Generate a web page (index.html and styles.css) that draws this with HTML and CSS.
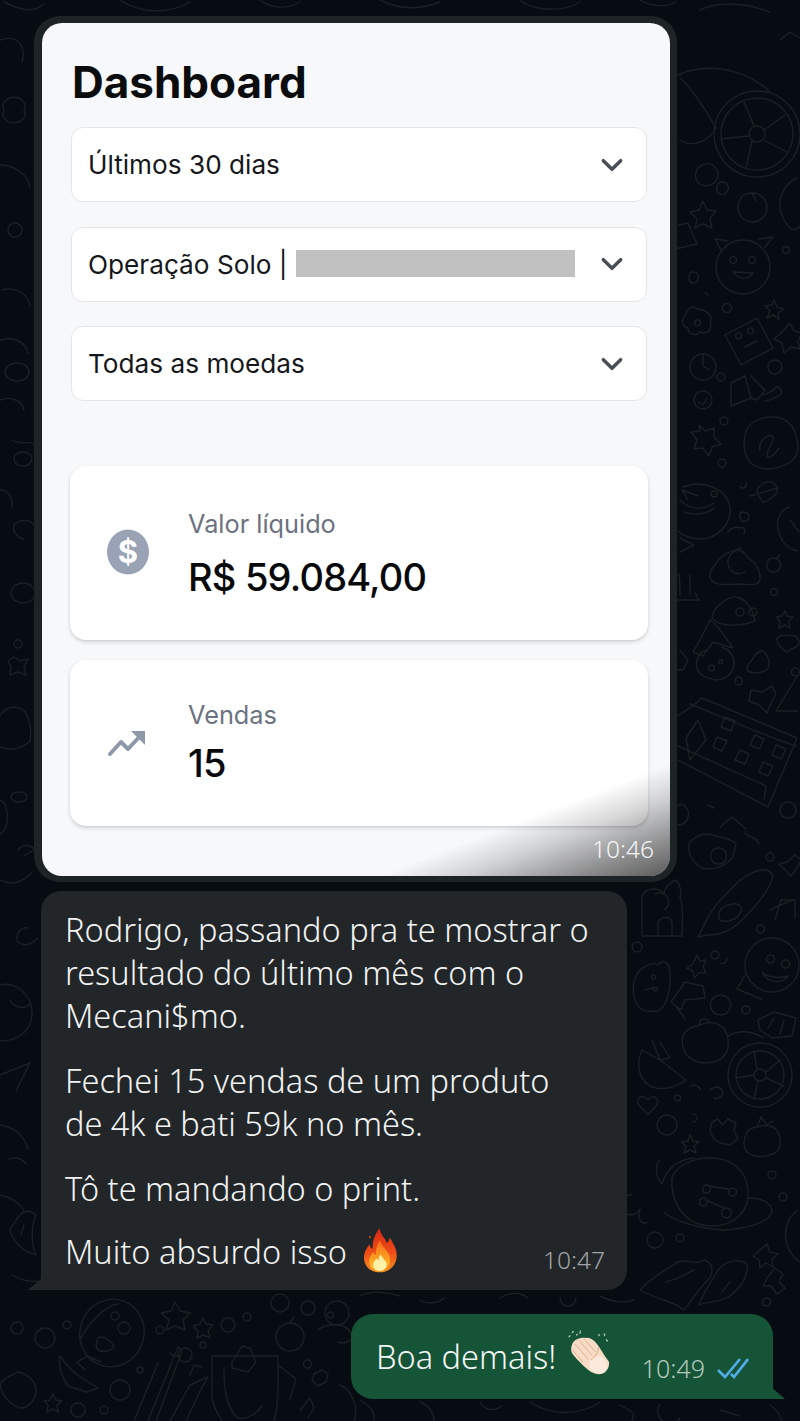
FILE: index.html
```html
<!DOCTYPE html>
<html lang="pt-BR">
<head>
<meta charset="utf-8">
<title>Dashboard</title>
<link rel="stylesheet" href="styles.css">
</head>
<body>
<svg class="doodles" viewBox="0 0 800 1421" aria-hidden="true">
  <g class="doodle-lines">
    <!-- top right: wheel, face, stars -->
    <circle cx="757" cy="134" r="43"/><circle cx="757" cy="134" r="36"/><circle cx="757" cy="134" r="8"/>
    <path d="M754 126L744 102M764 130L785 115M764 140L787 152M749 136L721 139M752 141L746 168"/>
    <path d="M678 75C705 62 745 68 770 92M680 140C692 148 708 142 716 128C706 110 690 86 680 78M705 164c-8 2-12 10-8 17s16 6 20-2-4-17-12-15z"/>
    <path d="M722 182c5 0 7 4 6 8s-7 6-10 3-1-11 4-11zM752 193c9 0 15 7 15 15s-8 15-16 14-14-8-13-16 6-13 14-13zM752 193l4 8"/>
    <path d="M703 201l4 9 9 1-6 7 2 10-9-4-8 4 2-9-7-7 9-2z"/>
    <circle cx="743" cy="267" r="27"/><circle cx="733" cy="260" r="3.5"/><circle cx="752" cy="260" r="3.5"/>
    <path d="M733 272c5 8 15 8 20 1zM722 252l-7-13 13 2M765 247l8-10-14 2"/><circle cx="786" cy="250" r="3.5"/>
    <path d="M797 178c-14 6-22 24-14 40s14 12 17 8M679 225l9-2 9 21-22 5M692 272c5-1 8 4 5 9s-9 0-8-4 1-5 3-5z"/>
    <circle cx="727" cy="308" r="4.5"/><path d="M774 300l3 7 7 2-6 4 1 7-5-5-7 3 3-7-5-5 7-1zM705 293l3 2"/>
    <path d="M697 309c-4-4-12 0-11 6-5 3-5 11 2 13 0 6 8 9 12 4 7 3 13-3 10-10 4-7-6-13-13-13zM697 320a3 3 0 1 0 1 0"/>
    <path d="M725 335l32-17 16 30-32 17zM738 333a3 3 0 1 0 1 0M750 328a3 3 0 1 0 1 0M745 347l12-6"/>
    <path d="M790 323l4 8 8 2-4 8 2 8-9-2-7 6-2-10-8-4 7-6z"/>
    <!-- right column -->
    <circle cx="703" cy="367" r="13"/><path d="M703 354v12l6 4"/><circle cx="721" cy="377" r="4"/><circle cx="775" cy="367" r="7"/>
    <circle cx="703" cy="400" r="9"/><path d="M698 402l5 3 4-7"/><circle cx="724" cy="421" r="4"/>
    <path d="M731 383l14-7 6 22-20 8zM751 376l14 14-8 10-6-2M763 395c6-2 10-4 13-8a5 5 0 0 1 5 7c-4 3-10 6-16 7"/>
    <path d="M745 435c2-12 14-18 28-18 16 0 24 12 25 30 1 14-16 22-32 22-20-2-24-18-21-34z"/><path d="M760 450c-2-10 8-16 13-14 3 4-6 12-6 20 2 4 8-2 12-8"/>
    <path d="M699 425l6 6 9-3 0 9 7 7-9 3-3 9-6-8-9 1 3-9-6-8 9-1z"/><circle cx="722" cy="463" r="4"/>
    <path d="M683 487c20-8 44 2 47 20 2 16-12 32-30 32-8 0-16-3-22-8"/><path d="M680 500c8 8 20 12 34 3M688 500l-6-10 16 6M684 512c10 4 24 2 30-4"/><circle cx="714" cy="494" r="3"/>
    <path d="M757 490c3-6 10-10 14-8 6 2 8 8 5 12s-10 8-13 8c-3-4-6-8-6-12zM750 496l28-8M740 486a3 3 0 1 0 6-3"/>
    <path d="M790 507c-9 2-14 12-12 22s8 20 20 22M790 520c4 4 6 10 10 12"/><path d="M743 512c4 0 7 3 6 6s-6 5-8 2-2-8 2-8zM728 532c3-4 8-6 12-4 4-2 6 2 4 6"/>
    <path d="M680 538l14 7-14 7M678 575c2-5 2 20 2 20M690 575v20M695 592l3 7M676 600h24"/>
    <path d="M715 565c6-10 14-14 22-15 7-1 9 7 14 10 6 4 10 12 9 20-2 7-14 4-22 4-12 1-28 2-28-8 0-4 2-8 5-11z"/><path d="M741 548c-8 3-14 8-13 16s10 12 17 8"/>
    <path d="M773 558a7 7 0 1 0 1 0M776 559l4-4"/><circle cx="774" cy="592" r="3.5"/>
    <path d="M712 618c0-10 16-22 24-21 10 1 18 14 19 24-10 4-34 8-43-3z"/><circle cx="740" cy="612" r="4"/><circle cx="753" cy="612" r="4"/>
    <path d="M785 611l2 5 6 1-4 4 1 7-5-3-6 3 1-7-4-4 6-1z"/><path d="M787 652c4-4 12-4 12-10s-8-8-12-6c-4-2-10 0-10 4s6 10 10 12zM795 668a4 4 0 1 0 1 0"/>
    <path d="M710 620l-10 20-7 12 10 4 10-14 20 6-16-22zM680 650l8 10-5 10-6 0"/>
    <path d="M708 650c-9 1-13 10-11 18s10 10 19 12c10 0 18-8 18-16s-4-14-12-17M711 665a3 3 0 1 0 1 0M720 660a2 2 0 1 0 1 0M738 677a4 4 0 1 0 1 0"/>
    <path d="M752 660c4-8 10-12 14-6s4 10 2 14-12 6-18 4-2-8 2-12z"/>
    <path d="M751 690l11 2 10-6 4 8-5 9-4 10-8-8-10-4z"/>
    <path d="M798 675l-22 36 22 0"/>
    <path d="M702 698c-8 8-18 14-28 20M702 698l95 40-29 69-90-47M690 704c30 12 70 30 106 42M678 746l88 40-2 14"/><path d="M698 720l8 20-16 20-4-22zM725 717l10 4-4 10-10-4zM755 735l9 4-5 10-9-4zM776 745l10 4-5 10-9-4zM717 737l10 4-5 10-9-4zM740 750l9 4-4 10-10-4zM763 762l10 4-5 10-9-4z"/>
    <circle cx="788" cy="810" r="8"/><path d="M678 805c6-2 12 4 10 12s-8 8-10 8M720 827l12-10 14 12M708 805l6 3"/>
    <path d="M690 842c8-8 18-10 26-6 8 2 14 2 20 8-2 8-2 14-8 18-8 6-18 8-26 6-10-6-16-16-12-26zM718 848a8 8 0 1 0 1 0M745 832c2 6 12 4 14 12"/>
    <circle cx="770" cy="857" r="4"/><path d="M795 855l6 5-4 8-6 8-6-6-6-6 8-2z"/><path d="M735 885c14-14 32-20 38-10-2 14-16 30-30 44-12 12-22 16-36 16l-9 2 7-14c6-14 18-26 30-38zM722 908c6-4 14-6 18-2s-2 12-8 14-12 2-13-2 1-8 3-10z"/>
    <path d="M642 936v-40c4-10 20-8 22-2 0-6 6-12 12-14 4 4 6 12 4 18 4 6 2 24 2 38zM655 894a9 9 0 0 1 9 16M658 936v-14c4-6 12-6 14 0v14"/>
    <path d="M770 910c8-4 16-8 24-10M775 920l6-20h14v18M760 925a4 4 0 1 0 1 0"/>
    <circle cx="637" cy="947" r="5"/><path d="M697 955l3 6 6-1-3 7 3 6-7 0-5 5-1-7-6-3 6-4z"/><circle cx="715" cy="955" r="4"/><path d="M720 963c3 2 6-1 7-4"/>
    <path d="M640 970c8-6 14-8 18-5 2-4 8-4 10 0 3 4 2 12 2 20-2 16-8 28-16 26-10 2-16-2-20-14-2-10 0-20 6-27zM653 975a2 2 0 1 0 1 0M655 987a2 2 0 1 0 1 0M645 990l8-2"/>
    <path d="M685 982l18 4 2 12-20 2-4 10-10-8 14-20zM675 1005l10 14"/>
    <circle cx="772" cy="965" r="27"/><path d="M762 972c6 12 20 12 26 4-8 2-20 2-26-4zM770 955a4 4 0 1 0 1 0M785 960a4 4 0 1 0 1 0M745 975l-8 14 24 10"/>
    <path d="M720 995a10 10 0 1 0 1 0"/><circle cx="746" cy="1010" r="4"/><path d="M758 1020l16-8 22 6-4 18-20 2-12-8zM768 1028l6-10M780 1034l4-14"/>
    <path d="M700 1025c14-6 26 0 28 14s-6 24-22 24-26-12-23-26c1-6 8-10 17-12zM700 1025c-2-4 2-6 4-6 3 0 5 2 5 5M728 1036c14-8 26-4 36 2"/>
    <path d="M642 1050c-6 14-4 34 14 38 12 2 22-2 30-8l-26-20zM652 1040l8 20 10-2-10-16"/>
    <circle cx="760" cy="1075" r="32"/><circle cx="760" cy="1075" r="24"/><circle cx="760" cy="1075" r="6"/><path d="M757 1069l-3-18M766 1072l14-12M766 1078l18 8M754 1075l-18 3M758 1081l-4 18"/>
    <path d="M648 1115c4-6 12-10 9-16-3-4-7-2-9 1-2-3-8-5-10-1-2 6 5 10 10 16zM677 1095a3 3 0 1 0 1 0M710 1090c4-4 10-4 12 0s-2 10-8 8M690 1086c4-2 10 0 10 4"/>
    <circle cx="667" cy="1125" r="10"/><path d="M693 1114a4 4 0 1 1 0 8M712 1122l6-3 4 6 6-6 8 4-2 8 4 8-8 6-10-2-6-4-4-8zM690 1135l3 6 6 1-5 4 2 7-6-3-6 3 2-7-5-4 7-1z"/>
    <path d="M757 1127c-10 0-15 12-12 22 4 8 18 10 30 4 8-6 6-22-2-26-6-2-10-2-16 0M757 1127l4-10 6 8 6-4"/>
    <path d="M660 1160c-6 6-4 18 2 24 4-14 14-24 32-26"/>
    <path d="M672 1178c4-12 20-20 38-20 22 0 36 12 38 32 2 22-14 36-36 36-26 0-42-22-40-48zM706 1185a4 4 0 1 0 1 0M732 1188a4 4 0 1 0 1 0M703 1198a4 4 0 1 0 1 0M726 1208a5 5 0 1 0 1 0M708 1186l20 3M706 1200l18 8"/>
    <path d="M748 1198c16 0 24 6 24 14-4 12-26 16-46 18-20 0-52-8-62-18"/><circle cx="772" cy="1175" r="4"/><circle cx="783" cy="1197" r="4"/>
    <path d="M640 1210c-4 8 2 16 8 12M632 1195a10 10 0 1 0 8 14"/><circle cx="655" cy="1240" r="8"/><circle cx="680" cy="1238" r="4"/>
    <path d="M640 1290c10-12 26-20 38-28 8-4 18 4 26-2 8 2 12 12 2 22-8 8-14 18-22 28-8-8-26-10-44-20zM666 1282c10-2 20-8 28-12"/>
    <path d="M760 1250l7-6 3 8 8 2-6 5 1 8-7-4-6 5-1-8-6-4z"/><path d="M715 1275c4-8 14-16 24-14 6 0 10 4 8 10-2 10-8 18-16 24-10 8-22 6-32 10 2-8 10-20 16-30zM722 1292l8-10"/>
    <path d="M775 1268l8 6-4 8 6 6-8 6-6-8-8 0 4-8zM798 1210c-16 10-18 38 2 52M766 1298a4 4 0 1 0 1 0"/>
    <!-- left margin -->
    <path d="M0 40c18-6 26 6 22 22M4 110a11 9 0 1 0 20 0a11 9 0 1 0-20 0M0 165c12 0 28 8 30 22M8 230a7 7 0 1 0 14 0a7 7 0 1 0-14 0M2 290c14-4 26 4 28 16"/>
    <ellipse cx="17" cy="372" rx="12" ry="9"/><path d="M0 340c14-4 26 2 28 14M0 400c10-4 22 0 24 10"/><ellipse cx="23" cy="459" rx="9" ry="7"/><path d="M12 440c10 6 18 0 22 4M0 490c8 0 14 8 12 18"/>
    <path d="M14 525c6-6 16-6 20 0M14 525c-2 6 4 14 10 14"/><ellipse cx="23" cy="593" rx="12" ry="10"/><circle cx="18" cy="644" r="4"/><path d="M8 661l6-4 6 4 8-2-4 8 2 8-8-3-8 3 1-8z"/>
    <path d="M0 715c8-10 20-10 26-2 4 8 6 20 4 28-8 8-20 10-30 6"/><ellipse cx="19" cy="797" rx="8" ry="5"/><path d="M0 800c10 4 10 28 0 34M18 850c4-6 14-6 16 0l-10 6"/><path d="M0 880c12 6 24 2 32-8M28 928c-6-2-14 6-10 14 8 6 16 0 20-4"/>
    <path d="M0 985c16-4 32 10 32 28s-14 28-32 28M10 1000c4 8 14 10 20 4M0 1075l30-12-14 28"/><path d="M0 1125c14 2 24 10 28 24M8 1160c6-4 14-2 18 4M0 1195c10 2 20 8 24 16"/>
    <path d="M36 1255c-6-12-4-32 0-40-14-12-20 8-26 14 2 12 12 22 26 26zM24 1225l-3 10"/>
    <!-- bottom -->
    <circle cx="17" cy="1328" r="6"/><circle cx="45" cy="1338" r="10"/><circle cx="67" cy="1325" r="4"/><path d="M12 1275c20 12 44 6 58-6M50 1272c10 2 20-2 24-10"/>
    <ellipse cx="112" cy="1333" rx="32" ry="34" transform="rotate(20 112 1333)"/><circle cx="115" cy="1316" r="4"/><circle cx="124" cy="1328" r="6"/><path d="M98 1338c4-4 14 4 16 8-2 6-16 8-18 0zM80 1340c8-16 24-34 38-36"/>
    <path d="M175 1302l5 9 10 2-7 7 2 10-10-4-9 4 3-10-8-7 10-2z"/><path d="M203 1318l3 6 7 1-5 6 2 7-7-3-6 3 1-7-5-5 7-2z"/>
    <circle cx="228" cy="1325" r="7"/><circle cx="247" cy="1317" r="4"/><circle cx="280" cy="1303" r="9"/><circle cx="308" cy="1308" r="7"/><circle cx="337" cy="1313" r="12"/><path d="M318 1330c6-6 30-10 34 6 0 6-8 8-14 6M330 1312a3 3 0 1 0 1 0"/>
    <circle cx="290" cy="1337" r="14"/><path d="M290 1323l4-6"/><circle cx="160" cy="1330" r="4"/><circle cx="185" cy="1355" r="7"/><circle cx="203" cy="1345" r="3"/>
    <path d="M18 1372c-8 4-16 6-18 14 2 8 8 18 20 22 10 0 16-10 16-18s-8-16-18-18zM60 1356c6 8 12 16 22 22l16 10-12 4-18-6c-6-8-10-20-8-30zM85 1370l-8-8 10-6 14 6"/>
    <circle cx="120" cy="1390" r="10"/><path d="M53 1394l3 6 6 1-5 4 1 7-5-3-6 3 1-7-4-4 6-1z"/><circle cx="78" cy="1410" r="7"/><circle cx="104" cy="1410" r="4"/><circle cx="140" cy="1370" r="3"/>
    <path d="M134 1421l24-58M148 1421l30-74 4 4-26 70M170 1421l20-36 18-8-8 14-14 30M190 1375l4-10 8 2"/>
    <path d="M212 1356h66v30c0 16-2 28-4 35M212 1356v40c0 10 6 18 10 25M224 1368c0 20 2 40 14 50 10 2 20-6 24-12M232 1362l10-16 8 2 6 14-8 10-16-4zM278 1365l18 14-6 20"/>
    <path d="M180 1355c-4 2-8 0-10-2M307 1360a4 4 0 1 0 1 0M322 1370l6 4-2 8-8 4-6-6 2-6zM340 1385c10 4 20 20 14 36M300 1410l10-12 4 10-6 10"/>
    <path d="M360 1296c10-6 28-4 40 0M420 1300c6 4 18 4 24-2M500 1298c10-6 20-6 28 0M560 1298a8 8 0 0 0 16 0M600 1296c12 6 22 8 34 4"/>
    <path d="M360 1400c14 8 14 14 14 21M420 1402c10 4 14 12 14 19M480 1402c4 8 14 10 22 4M530 1402c20 14 50 14 70 0M620 1405l14 8-2 8M660 1404a12 12 0 0 0 20 14M720 1410l20 6M770 1405c6 4 10 10 12 16"/>
    <path d="M4 2c20 10 30 10 40 2M120 0c20 14 50 14 70 2M260 0c10 8 26 10 40 2M380 0c20 10 40 10 60 2M520 0c14 12 44 12 60 2M640 0c10 6 26 8 36 2M700 10c20-10 50-6 70 2M780 40l10-8 10 6"/>
  </g>
</svg>

<main class="chat">
  <div class="media-bubble">
    <section class="shot">
      <h1 class="title">Dashboard</h1>
      <div class="filters">
        <div class="select"><span>Últimos 30 dias</span><svg class="chevron" viewBox="0 0 24 24"><path d="M4 8l8 8 8-8"/></svg></div>
        <div class="select"><span>Operação Solo |</span><span class="redacted"></span><svg class="chevron" viewBox="0 0 24 24"><path d="M4 8l8 8 8-8"/></svg></div>
        <div class="select"><span>Todas as moedas</span><svg class="chevron" viewBox="0 0 24 24"><path d="M4 8l8 8 8-8"/></svg></div>
      </div>
      <div class="cards">
        <article class="card card-net">
          <div class="card-icon">
            <svg viewBox="0 0 42 46" class="icon-dollar"><ellipse cx="21" cy="23" rx="21" ry="22.5"/><text x="21" y="34" text-anchor="middle">$</text></svg>
          </div>
          <div class="card-body">
            <div class="card-label">Valor líquido</div>
            <div class="card-value">R$ 59.084,00</div>
          </div>
        </article>
        <article class="card card-sales">
          <div class="card-icon">
            <svg viewBox="0 0 40 28" class="icon-trend"><path d="M3 25L14 13l7 7L36 4"/><path class="head" d="M24 2h14v14z"/></svg>
          </div>
          <div class="card-body">
            <div class="card-label">Vendas</div>
            <div class="card-value">15</div>
          </div>
        </article>
      </div>
      <div class="shade"></div>
      <time class="shot-time">10:46</time>
    </section>
  </div>

  <div class="bubble incoming">
    <p>Rodrigo, passando pra te mostrar o resultado do último mês com o Mecani$mo.</p>
    <p>Fechei 15 vendas de um produto de 4k e bati 59k no mês.</p>
    <p>Tô te mandando o print.</p>
    <p class="last-line">Muito absurdo isso
      <svg class="emoji emoji-fire" viewBox="20 10 126 141">
        <defs>
          <linearGradient id="fireOuter" x1="0" y1="0" x2="0" y2="1"><stop offset="0" stop-color="#d92a14"/><stop offset="0.55" stop-color="#ee4c18"/><stop offset="1" stop-color="#f9941e"/></linearGradient>
          <linearGradient id="fireMid" x1="0" y1="0" x2="0" y2="1"><stop offset="0" stop-color="#f4701b"/><stop offset="0.6" stop-color="#fb9f20"/><stop offset="1" stop-color="#fdcb45"/></linearGradient>
        </defs>
        <path fill="url(#fireOuter)" d="M78 14C82 35 95 42 100 58C106 52 108 48 108 42C122 60 132 80 130 100C128 128 105 146 80 146C52 146 32 128 32 102C32 84 42 72 48 62C50 70 53 74 58 76C56 52 66 32 78 14Z"/>
        <path fill="url(#fireMid)" d="M80 50C84 68 100 78 108 95C116 118 100 142 80 142C58 142 44 126 48 106C50 96 56 90 60 84C62 90 64 92 68 94C66 78 72 62 80 50Z"/>
        <path fill="#fff2a8" d="M82 92C86 104 98 110 100 122C100 134 90 142 80 142C68 142 60 134 60 124C60 114 66 110 70 104C72 108 74 110 76 110C76 104 78 98 82 92Z"/>
        <circle cx="50" cy="40" r="3" fill="#e44d1a"/><circle cx="112" cy="50" r="2.5" fill="#e44d1a"/>
      </svg>
    </p>
    <time class="msg-time">10:47</time>
    <svg class="tail tail-left" viewBox="0 0 14 12"><path d="M14 0v12H0z"/></svg>
  </div>

  <div class="bubble outgoing">
    <span class="out-text">Boa demais!
      <svg class="emoji emoji-clap" viewBox="15 15 138 150">
        <path class="spark" d="M21 41l3-3M31 28l3-2M55 24l-1 7M110 38l2-3M127 33l1 5M136 54l-3-4M46 34l-2 2"/>
        <path fill="#f7dcc6" d="M30 65C35 50 55 42 72 45C85 42 100 55 110 70C120 85 128 100 140 115C145 128 135 150 118 153C105 155 90 150 78 140C60 125 40 105 30 90C26 82 27 72 30 65Z"/>
        <path fill="#fbeadc" d="M88 108C100 100 115 98 125 105C136 115 140 135 126 148C112 156 96 148 84 138C80 130 80 116 88 108Z"/>
        <path class="fingers" d="M40 64L78 108M53 54L90 97M67 49L100 86M30 80L62 116"/>
        <path class="fingers" d="M110 72C108 90 98 104 88 110"/>
      </svg>
    </span>
    <span class="out-meta">
      <time class="msg-time-out">10:49</time>
      <svg class="ticks" viewBox="0 0 32 22"><path d="M1 13l7 7L23 2M14 17l3 3L31 2"/></svg>
    </span>
    <svg class="tail tail-right" viewBox="0 0 14 12"><path d="M0 0v12h14z"/></svg>
  </div>
</main>
</body>
</html>
```

FILE: styles.css
```css
* { box-sizing: border-box; }
html, body { margin: 0; height: 1421px; overflow: hidden; }
body {
  background: #060c12;
  font-family: "Noto Sans", "Open Sans", sans-serif;
  color: #f2f3f3;
  position: relative;
}
.doodles { position: absolute; inset: 0; width: 800px; height: 1421px; }
.doodle-lines { fill: none; stroke: #1a2125; stroke-width: 1.4; stroke-linecap: round; stroke-linejoin: round; }

.chat {
  position: relative;
  display: flex;
  flex-direction: column;
  padding: 16px 27px 0 34px;
}

/* Image message */
.media-bubble {
  width: 643px;
  height: 866px;
  padding: 7px 7px 6px 8px;
  background: #1e2326;
  border-radius: 26px;
}
.shot {
  position: relative;
  height: 853px;
  padding: 37px 23px 0 29px;
  background: #f7f8fa;
  border-radius: 20px;
  overflow: hidden;
  font-family: Inter, sans-serif;
  color: #0b0c0e;
}
.title {
  margin: 0 0 0 1px;
  font-size: 44px;
  line-height: 44px;
  font-weight: 700;
}
.filters {
  display: flex;
  flex-direction: column;
  gap: 24.5px;
  margin-top: 23px;
}
.select {
  display: flex;
  align-items: center;
  height: 75px;
  padding: 0 21px 0 16px;
  background: #fff;
  border: 1.5px solid #e3e5e9;
  border-radius: 12px;
  font-size: 26.2px;
  font-weight: 400;
  color: #15171a;
}
.redacted {
  flex: none;
  width: 279px;
  height: 27px;
  margin-left: 8px;
  margin-top: -2px;
  background: #c1c1c1;
}
.chevron {
  flex: none;
  width: 26px;
  height: 26px;
  margin-left: auto;
  fill: none;
  stroke: #4a4f57;
  stroke-width: 3.2;
  stroke-linecap: round;
  stroke-linejoin: round;
}
.cards {
  display: flex;
  flex-direction: column;
  gap: 20px;
  margin-top: 65px;
  margin-left: -1px;
  margin-right: -1px;
}
.card {
  display: flex;
  align-items: center;
  padding-left: 37px;
  background: #fff;
  border-radius: 16px;
  box-shadow: 0 2px 4px rgba(0,0,0,.14), 0 1px 2px rgba(0,0,0,.06);
}
.card-net { height: 174px; }
.card-sales { height: 166px; }
.card-icon { flex: none; width: 81px; display: flex; }
.card-net .card-icon { margin-top: -3px; }
.icon-dollar { width: 42px; height: 46px; fill: #9aa3b5; }
.icon-dollar text {
  fill: #fff;
  font-family: Inter, sans-serif;
  font-weight: 700;
  font-size: 31px;
}
.icon-trend { width: 40px; height: 28px; fill: none; stroke: #8f98a8; stroke-width: 4; stroke-linecap: round; stroke-linejoin: round; }
.icon-trend .head { fill: #8f98a8; stroke: none; }
.card-label { font-size: 25.3px; line-height: 30px; color: #6b7280; }
.card-value { font-size: 38px; line-height: 46px; font-weight: 500; color: #08090b; letter-spacing: -0.8px; }
.card-net .card-body { padding-top: 3px; }
.card-net .card-value { margin-top: 15px; }
.card-sales .card-value { margin-top: 10px; }
.shade {
  position: absolute;
  inset: 0;
  background: linear-gradient(159deg, rgba(40,40,40,0) calc(100% - 105px), rgba(40,40,40,.18) calc(100% - 75px), rgba(40,40,40,.5) calc(100% - 35px), rgba(40,40,40,.76) 100%);
  pointer-events: none;
}
.shot-time {
  position: absolute;
  right: 16px;
  bottom: 12px;
  font-family: "Noto Sans", sans-serif;
  font-size: 24.5px;
  line-height: 30px;
  font-weight: 300;
  color: #f6f6f6;
}

/* Text bubbles */
.bubble { position: relative; }
.incoming {
  width: 586px;
  height: 399px;
  margin-top: 9px;
  margin-left: 7px;
  padding: 17px 35px 0 24px;
  background: #222629;
  border-radius: 20px 20px 20px 0;
  font-size: 32.5px;
  line-height: 43px;
  font-weight: 300;
  color: #f1f2f2;
}
.incoming p { margin: 0 0 22px; }
.incoming .last-line { display: flex; align-items: center; gap: 13px; margin-top: -2px; }
.emoji { flex: none; }
.emoji-fire { width: 42px; height: 47px; margin: -4px 0 -2px; }
.msg-time {
  position: absolute;
  right: 22px;
  bottom: 15px;
  font-size: 24.5px;
  line-height: 30px;
  font-weight: 300;
  color: #a0a4a8;
}
.tail { position: absolute; bottom: 0; width: 14px; height: 12px; }
.tail-left { left: -13px; fill: #222629; }
.tail-right { right: -12px; fill: #165438; }

.outgoing {
  align-self: flex-end;
  display: flex;
  align-items: center;
  width: 422px;
  height: 85px;
  margin-top: 24px;
  padding: 0 24px 0 25px;
  background: #165438;
  border-radius: 22px 22px 0 22px;
  font-size: 32.5px;
  font-weight: 300;
  color: #f2f6f3;
}
.out-text { display: flex; align-items: center; gap: 11px; }
.emoji-clap { width: 46px; height: 50px; margin-top: -8px; }
.spark { fill: none; stroke: #a9c2b3; stroke-width: 4; stroke-linecap: round; }
.fingers { fill: none; stroke: #dfb092; stroke-width: 3; stroke-linecap: round; }
.out-meta { margin-left: auto; display: flex; align-items: center; gap: 12px; margin-top: 22px; }
.msg-time-out { font-size: 25px; line-height: 30px; font-weight: 300; color: #b4cabd; }
.ticks { width: 32px; height: 22px; fill: none; stroke: #52ace6; stroke-width: 2.7; }
```
